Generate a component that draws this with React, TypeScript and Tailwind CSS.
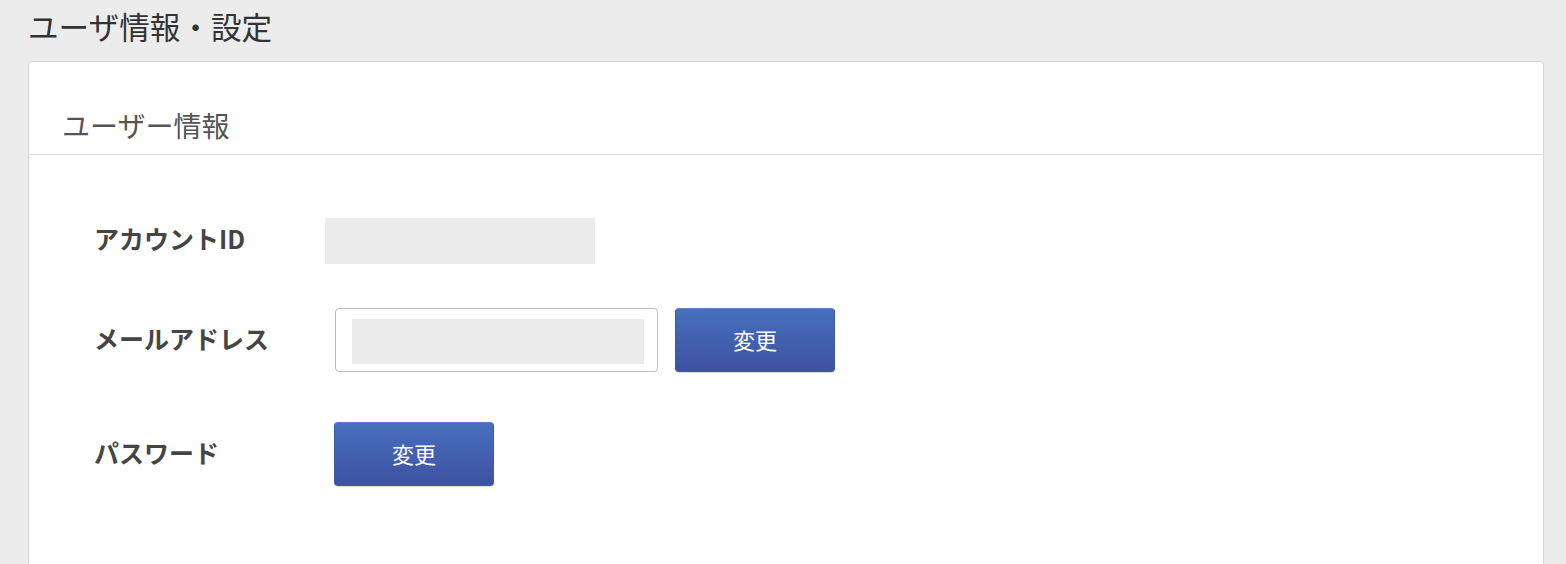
import React from "react";

const font = { fontFamily: '"Noto Sans CJK JP", "Noto Sans", sans-serif' };

function BlueButton({ className = "" }: { className?: string }) {
  return (
    <button
      className={`flex h-[64px] w-[160px] items-center justify-center rounded-[4px] border border-[#3d5aa8] border-t-[#5a7fcb] bg-gradient-to-b from-[#4670bd] to-[#3e52a0] pb-[2px] text-[22px] leading-none text-white shadow-[0_1px_1px_rgba(0,0,0,0.15)] ${className}`}
    >
      変更
    </button>
  );
}

export default function App() {
  return (
    <div className="min-h-screen bg-[#ececec] pl-[28px] pr-[22px]" style={font}>
      <h1 className="pt-[11px] text-[30.6px] leading-[30px] font-normal text-[#333333]">
        ユーザ情報・設定
      </h1>
      <div className="mt-[20px] rounded-t-[4px] border border-[#d6d6d6] bg-white">
        <div className="border-b border-[#dedede] pl-[33px] pt-[49px] pb-[15px]">
          <h2 className="text-[28px] leading-[28px] text-[#555555]">ユーザー情報</h2>
        </div>
        <div className="pl-[65px] pt-[63px] pb-[80px]">
          <div className="flex h-[46px] items-center">
            <div className="w-[231px] pb-[6px] text-[25px] font-bold leading-none text-[#454545]">
              アカウントID
            </div>
            <div className="h-[46px] w-[270px] bg-[#ebebeb]" />
          </div>
          <div className="mt-[44px] flex h-[64px] items-center">
            <div className="w-[231px] pb-[4px] text-[25px] font-bold leading-none text-[#454545]">
              メールアドレス
            </div>
            <div className="ml-[10px] h-[64px] w-[323px] rounded-[4px] border border-[#bdbdbd] bg-white pl-[16px] pt-[10px]">
              <div className="h-[45px] w-[292px] bg-[#ebebeb]" />
            </div>
            <BlueButton className="ml-[17px]" />
          </div>
          <div className="mt-[50px] flex h-[64px] items-center">
            <div className="w-[231px] pb-[4px] text-[25px] font-bold leading-none text-[#454545]">
              パスワード
            </div>
            <BlueButton className="ml-[9px]" />
          </div>
        </div>
      </div>
    </div>
  );
}
